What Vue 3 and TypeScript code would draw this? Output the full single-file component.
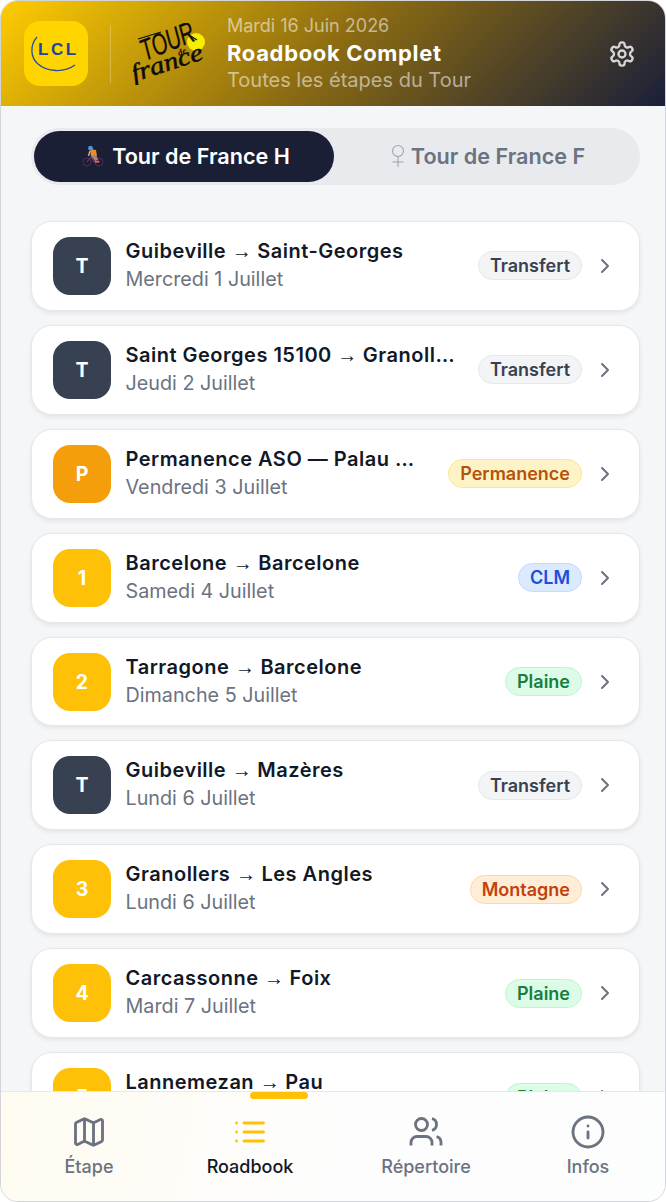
<script setup lang="ts">
type Row = { k: string; tone: string; title: string; date: string; tag: string; tagTone: string };
const rows: Row[] = [
  { k: 'T', tone: 'dark', title: 'Guibeville → Saint-Georges', date: 'Mercredi 1 Juillet', tag: 'Transfert', tagTone: 'grey' },
  { k: 'T', tone: 'dark', title: 'Saint Georges 15100 → Granollers', date: 'Jeudi 2 Juillet', tag: 'Transfert', tagTone: 'grey' },
  { k: 'P', tone: 'orange', title: 'Permanence ASO — Palau Sant Jordi', date: 'Vendredi 3 Juillet', tag: 'Permanence', tagTone: 'amber' },
  { k: '1', tone: 'gold', title: 'Barcelone → Barcelone', date: 'Samedi 4 Juillet', tag: 'CLM', tagTone: 'blue' },
  { k: '2', tone: 'gold', title: 'Tarragone → Barcelone', date: 'Dimanche 5 Juillet', tag: 'Plaine', tagTone: 'green' },
  { k: 'T', tone: 'dark', title: 'Guibeville → Mazères', date: 'Lundi 6 Juillet', tag: 'Transfert', tagTone: 'grey' },
  { k: '3', tone: 'gold', title: 'Granollers → Les Angles', date: 'Lundi 6 Juillet', tag: 'Montagne', tagTone: 'peach' },
  { k: '4', tone: 'gold', title: 'Carcassonne → Foix', date: 'Mardi 7 Juillet', tag: 'Plaine', tagTone: 'green' },
  { k: '5', tone: 'gold', title: 'Lannemezan → Pau', date: 'Mercredi 8 Juillet', tag: 'Plaine', tagTone: 'green' },
];
const parts = (t: string): string[] => t.split(' → ');
</script>

<template>
  <div class="frame">
    <header class="head">
      <div class="lcl">
        <svg width="64" height="65" viewBox="0 0 64 65">
          <path d="M13 16C6 24 6 36 14 43c9 8 26 9 37 1" fill="none" stroke="#2a4a9a" stroke-width="1.3" />
          <text x="14" y="34" class="lcl-text">LCL</text>
        </svg>
      </div>
      <div class="sep"></div>
      <svg class="tdf" width="74" height="62" viewBox="0 0 74 62">
        <circle cx="63" cy="19" r="9" fill="#f8ec00" />
        <path d="M5 16 28 9M53 10l11 7" fill="none" stroke="#0c0c0c" stroke-width="1.2" />
        <text x="12" y="38" class="tdf-tour" textLength="56" lengthAdjust="spacingAndGlyphs" transform="rotate(-22 12 38)">TOUR</text>
        <text x="46" y="33" class="tdf-de" transform="rotate(-22 46 33)">de</text>
        <text x="1" y="59" class="tdf-fr" textLength="74" lengthAdjust="spacingAndGlyphs" transform="rotate(-18 1 59)">france</text>
      </svg>
      <div class="head-text">
        <div class="h-date">Mardi 16 Juin 2026</div>
        <div class="h-title">Roadbook Complet</div>
        <div class="h-sub">Toutes les étapes du Tour</div>
      </div>
      <svg class="gear" width="28" height="28" viewBox="0 0 24 24" fill="none" stroke="currentColor" stroke-width="2" stroke-linecap="round" stroke-linejoin="round">
        <path d="M12.22 2h-.44a2 2 0 0 0-2 2v.18a2 2 0 0 1-1 1.73l-.43.25a2 2 0 0 1-2 0l-.15-.08a2 2 0 0 0-2.73.73l-.22.38a2 2 0 0 0 .73 2.73l.15.1a2 2 0 0 1 1 1.72v.51a2 2 0 0 1-1 1.74l-.15.09a2 2 0 0 0-.73 2.73l.22.38a2 2 0 0 0 2.73.73l.15-.08a2 2 0 0 1 2 0l.43.25a2 2 0 0 1 1 1.73V20a2 2 0 0 0 2 2h.44a2 2 0 0 0 2-2v-.18a2 2 0 0 1 1-1.73l.43-.25a2 2 0 0 1 2 0l.15.08a2 2 0 0 0 2.73-.73l.22-.39a2 2 0 0 0-.73-2.73l-.15-.08a2 2 0 0 1-1-1.74v-.5a2 2 0 0 1 1-1.74l.15-.09a2 2 0 0 0 .73-2.73l-.22-.38a2 2 0 0 0-2.73-.73l-.15.08a2 2 0 0 1-2 0l-.43-.25a2 2 0 0 1-1-1.73V4a2 2 0 0 0-2-2z" />
        <circle cx="12" cy="12" r="3" />
      </svg>
    </header>

    <main class="main">
      <div class="toggle">
        <div class="seg on">
          <svg class="emo" width="22" height="22" viewBox="0 0 22 22">
            <circle cx="5" cy="17" r="4" fill="none" stroke="#4a2a6a" stroke-width="1" />
            <circle cx="17" cy="17" r="4" fill="none" stroke="#4a2a6a" stroke-width="1" />
            <path d="M5 17l4-5 6 0 2 5M9 12l3 5h4" fill="none" stroke="#b02a4a" stroke-width="1" />
            <path d="M8 4l6 1 1 6-6 0z" fill="#f0892a" />
            <path d="M9 11l5-1 2 5-3 1z" fill="#9a8a80" />
            <path d="M13 16h4l.5 1.5h-4.5z" fill="#e8703a" />
            <path d="M8 6l-1.5 5" fill="none" stroke="#e8b070" stroke-width="1.4" />
            <circle cx="8.5" cy="3.2" r="2.4" fill="#4a98d8" />
          </svg>
          Tour de France H
        </div>
        <div class="seg">
          <svg class="fem" width="16" height="24" viewBox="0 0 16 24" fill="none" stroke="#9ca3af" stroke-width="1.1">
            <circle cx="8" cy="7" r="5.5" /><path d="M8 12.5V23M2.5 18h11" />
          </svg>
          Tour de France F
        </div>
      </div>
      <div class="list">
        <div v-for="r in rows" :key="r.title" class="card">
          <div class="badge" :class="r.tone">{{ r.k }}</div>
          <div class="txt">
            <div class="t">
              <template v-if="parts(r.title).length > 1">{{ parts(r.title)[0] }} <span class="arrow">→</span> {{ parts(r.title)[1] }}</template>
              <template v-else>{{ r.title }}</template>
            </div>
            <div class="d">{{ r.date }}</div>
          </div>
          <span class="tag" :class="r.tagTone">{{ r.tag }}</span>
          <svg class="chev" width="24" height="24" viewBox="0 0 24 24" fill="none" stroke="currentColor" stroke-width="2" stroke-linecap="round" stroke-linejoin="round"><path d="m9 18 6-6-6-6" /></svg>
        </div>
      </div>
    </main>

    <nav class="nav">
      <div class="item">
        <svg width="36" height="36" viewBox="0 0 24 24" fill="none" stroke="currentColor" stroke-width="1.9" stroke-linecap="round" stroke-linejoin="round">
          <path d="M14.106 5.553a2 2 0 0 0 1.788 0l3.659-1.83A1 1 0 0 1 21 4.619v12.764a1 1 0 0 1-.553.894l-4.553 2.277a2 2 0 0 1-1.788 0l-4.212-2.106a2 2 0 0 0-1.788 0l-3.659 1.83A1 1 0 0 1 3 19.381V6.618a1 1 0 0 1 .553-.894l4.553-2.277a2 2 0 0 1 1.788 0z" />
          <path d="M15 5.764v15" /><path d="M9 3.236v15" />
        </svg>
        <span>Étape</span>
      </div>
      <div class="item active">
        <i class="bar"></i>
        <svg class="gold-ic" width="36" height="36" viewBox="0 0 24 24" fill="none" stroke="currentColor" stroke-width="1.9" stroke-linecap="round" stroke-linejoin="round">
          <path d="M3 12h.01M3 18h.01M3 6h.01M8 12h13M8 18h13M8 6h13" />
        </svg>
        <span>Roadbook</span>
      </div>
      <div class="item">
        <svg width="36" height="36" viewBox="0 0 24 24" fill="none" stroke="currentColor" stroke-width="1.9" stroke-linejoin="round">
          <path d="M16 21v-2a4 4 0 0 0-4-4H6a4 4 0 0 0-4 4v2" /><circle cx="9" cy="7" r="4" />
          <path d="M16 3.128a4 4 0 0 1 0 7.744" /><path d="M22 21v-2a4 4 0 0 0-3-3.87" />
        </svg>
        <span>Répertoire</span>
      </div>
      <div class="item">
        <svg width="36" height="36" viewBox="0 0 24 24" fill="none" stroke="currentColor" stroke-width="1.9" stroke-linecap="round" stroke-linejoin="round">
          <circle cx="12" cy="12" r="10" /><path d="M12 16v-4" /><path d="M12 8h.01" />
        </svg>
        <span>Infos</span>
      </div>
    </nav>
  </div>
</template>

<style>
html, body { margin: 0; background: #fff; }
</style>

<style scoped>
.frame {
  width: 666px; height: 1202px; box-sizing: border-box;
  border: 1px solid #d3d5da; border-radius: 18px; overflow: hidden;
  display: flex; flex-direction: column;
  background: #f5f6f8; font-family: Inter, "Noto Sans", sans-serif;
}
.head {
  height: 105px; flex: none; box-sizing: border-box; padding: 20px 29px 20px 23px;
  display: flex; align-items: center;
  background: linear-gradient(135deg, #ffcc00 0%, #8a6a12 50%, #1a1f3a 100%);
}
.lcl {
  width: 64px; height: 65px; border-radius: 16px; background: #ffd500; flex: none;
}
.lcl svg { display: block; }
.lcl-text { font: 700 17px "Liberation Sans", sans-serif; fill: #24449a; letter-spacing: 2.6px; }
.sep { width: 1px; height: 58px; background: rgba(255,255,255,.25); margin: 0 22px; flex: none; }
.tdf { flex: none; margin-right: 20px; }
.tdf-tour { font: italic 400 30px "Liberation Sans", sans-serif; fill: #0c0c0c; stroke: #0c0c0c; stroke-width: .3px; }
.tdf-de { font: italic 700 9px "Liberation Serif", serif; fill: #0c0c0c; }
.tdf-fr { font: italic 400 25px "Liberation Serif", serif; fill: #0c0c0c; stroke: #0c0c0c; stroke-width: .5px; }
.head-text { flex: 1; min-width: 0; padding-bottom: 2px; }
.h-date { font-size: 18px; line-height: 24px; color: rgba(255,255,255,.55); }
.h-title { font-size: 22px; line-height: 30px; font-weight: 700; color: #fff; letter-spacing: .65px; }
.h-sub { font-size: 20px; line-height: 24px; color: rgba(255,255,255,.55); }
.gear { color: rgba(255,255,255,.8); flex: none; }

.main { flex: 1; min-height: 0; overflow: hidden; padding: 22px 25px 0 30px; box-sizing: border-box; }
.toggle {
  height: 57px; box-sizing: border-box; padding: 3px; border-radius: 29px; background: #e9eaee;
  display: flex; margin-bottom: 36px;
}
.seg {
  flex: 1; border-radius: 26px; display: flex; align-items: center; justify-content: center;
  font-size: 21.6px; font-weight: 600; color: #6b7280; padding: 0 0 1px 4px;
}
.seg.on { flex: 0 0 300px; box-sizing: border-box; background: #1a1f36; color: #fff; }
.emo { margin-right: 8px; flex: none; }
.fem { margin-right: 5px; flex: none; }
.list { display: flex; flex-direction: column; gap: 14px; }
.card {
  height: 89.9px; flex: none; box-sizing: border-box; padding: 0 22px 0 21px;
  background: #fff; border: 1px solid #e5e7eb; border-radius: 21px;
  box-shadow: 0 2px 4px rgba(0,0,0,.08);
  display: flex; align-items: center;
}
.badge {
  width: 58px; height: 58px; border-radius: 17px; flex: none; margin-right: 14.5px;
  display: flex; align-items: center; justify-content: center;
  font-size: 19.5px; font-weight: 700; color: #fff;
}
.dark { background: #374151; }
.orange { background: #f59e0b; }
.gold { background: #ffc107; }
.txt { flex: 1; min-width: 0; margin-right: 22px; padding-bottom: 1px; }
.t { font-size: 20px; line-height: 28px; font-weight: 600; color: #111827; white-space: nowrap; overflow: hidden; text-overflow: ellipsis; letter-spacing: .5px; }
.arrow { font-family: "Liberation Sans", sans-serif; font-weight: 400; letter-spacing: 0; }
.d { font-size: 19.75px; line-height: 29px; color: #6b7280; white-space: nowrap; }
.tag {
  flex: none; height: 29px; box-sizing: border-box; padding: 0 11px; border-radius: 15px; border: 1px solid;
  display: flex; align-items: center; font-size: 18px; font-weight: 600;
}
.grey { background: #f3f4f6; border-color: #e5e7eb; color: #374151; }
.amber { background: #fef3c7; border-color: #fde68a; color: #b45309; }
.blue { background: #dbeafe; border-color: #bfdbfe; color: #1d4ed8; }
.green { background: #dcfce7; border-color: #bbf7d0; color: #15803d; }
.peach { background: #ffedd5; border-color: #fed7aa; color: #c2410c; }
.chev { color: #6b7280; flex: none; margin-left: 11px; }

.nav {
  height: 110px; flex: none; box-sizing: border-box; border-top: 1px solid #e5e7eb;
  display: grid; grid-template-columns: 176px 146px 206px 118px; padding-top: 22px;
  background: linear-gradient(100deg, #fffbf0 0%, #fdfdfc 45%, #fcfdfd 100%);
}
.item {
  position: relative; display: flex; flex-direction: column; align-items: center;
  font-size: 18px; line-height: 26px; font-weight: 500; color: #6b7280; gap: 4px;
}
.item svg { display: block; height: 36px; }
.active { color: #111827; }
.gold-ic { color: #ffc107; }
.bar {
  position: absolute; top: -22px; left: 50%;
  width: 58px; height: 7px; border-radius: 4px; background: #ffc107;
}
</style>
